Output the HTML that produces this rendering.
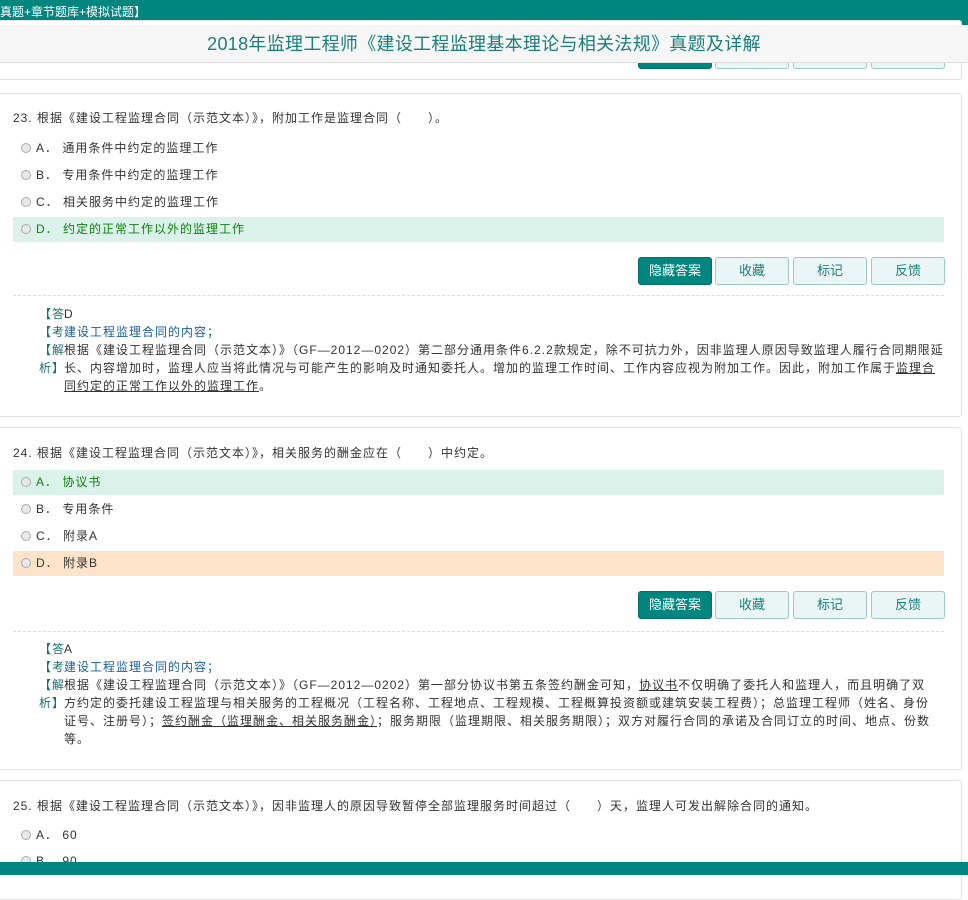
<!DOCTYPE html>
<html><head><meta charset="utf-8"><style>
*{margin:0;padding:0;box-sizing:border-box}
body{width:968px;height:875px;overflow:hidden;background:#fff;font-family:"Liberation Sans","Noto Sans CJK SC",sans-serif;font-size:12px;color:#333;position:relative;letter-spacing:1px}
.top{position:absolute;left:0;top:0;width:968px;height:25px;background:#00867f;color:#fff;font-size:12px;line-height:25px;padding-left:0;letter-spacing:0}
.hd{position:absolute;left:0;top:25px;width:968px;height:38px;background:#f6f6f6;border-bottom:1px solid #ddd;text-align:center;color:#1a7f7a;font-size:18px;line-height:38px;z-index:2;letter-spacing:0.3px}
.card{position:absolute;left:-6px;width:968px;border:1px solid #e3e3e3;border-radius:3px;background:#fff}
.q{position:absolute;left:18px;font-size:12px;white-space:nowrap}
.opt{position:absolute;left:18px;width:931px;height:25px;line-height:25px;padding-left:8px}
.opt i{display:inline-block;width:10px;height:10px;border:1px solid #aaa;border-radius:50%;background:#e8e8e8;vertical-align:-1px;margin-right:5px}
.g{background:#daf2ea;color:#118011}
.o{background:#fde3c9}
.btn{position:absolute;width:74px;height:28px;border:1px solid #9bc9c5;border-radius:3px;background:#eaf6f5;color:#1a7f7a;text-align:center;line-height:26px;font-size:13px;letter-spacing:0}
.btn.p{background:#00867f;color:#fff;border-color:#00706a}
.dash{position:absolute;left:18px;width:931px;border-top:1px dashed #ddd}
.ans{position:absolute;left:44px;width:905px;line-height:18px;font-size:12px}
.ans div{position:relative;padding-left:25px}
.ans b{position:absolute;left:0;font-weight:normal;color:#1a6f6a}
.bl{color:#1a5fa0}
u{text-decoration:underline}
.bot{position:absolute;left:0;top:862px;width:968px;height:13px;background:#00867f}
</style></head><body>
<div class="top">真题+章节题库+模拟试题】</div>
<div class="hd">2018年监理工程师《建设工程监理基本理论与相关法规》真题及详解</div>
<div class="card" style="top:20px;height:60px">
<div class="btn p" style="left:643px;top:20px"></div><div class="btn" style="left:720px;top:20px"></div><div class="btn" style="left:798px;top:20px"></div><div class="btn" style="left:876px;top:20px"></div>
</div>

<div class="card" style="top:93px;height:324px">
<div class="q" style="top:15px">23. 根据《建设工程监理合同（示范文本）》，附加工作是监理合同（　　）。</div>
<div class="opt" style="top:42px"><i></i>A．  通用条件中约定的监理工作</div>
<div class="opt" style="top:69px"><i></i>B．  专用条件中约定的监理工作</div>
<div class="opt" style="top:96px"><i></i>C．  相关服务中约定的监理工作</div>
<div class="opt g" style="top:123px"><i></i>D．  约定的正常工作以外的监理工作</div>
<div class="btn p" style="left:643px;top:163px">隐藏答案</div><div class="btn" style="left:720px;top:163px">收藏</div><div class="btn" style="left:798px;top:163px">标记</div><div class="btn" style="left:876px;top:163px">反馈</div>
<div class="dash" style="top:201px"></div>
<div class="ans" style="top:211px">
<div><b>【答</b>D</div>
<div class="bl"><b>【考</b>建设工程监理合同的内容；</div>
<div><b>【解<br>析】</b>根据《建设工程监理合同（示范文本）》（GF—2012—0202）第二部分通用条件6.2.2款规定，除不可抗力外，因非监理人原因导致监理人履行合同期限延长、内容增加时，监理人应当将此情况与可能产生的影响及时通知委托人。增加的监理工作时间、工作内容应视为附加工作。因此，附加工作属于<u>监理合同约定的正常工作以外的监理工作</u>。</div>
</div>
</div>

<div class="card" style="top:427px;height:343px">
<div class="q" style="top:16px">24. 根据《建设工程监理合同（示范文本）》，相关服务的酬金应在（　　）中约定。</div>
<div class="opt g" style="top:42px"><i></i>A．  协议书</div>
<div class="opt" style="top:69px"><i></i>B．  专用条件</div>
<div class="opt" style="top:96px"><i></i>C．  附录A</div>
<div class="opt o" style="top:123px"><i></i>D．  附录B</div>
<div class="btn p" style="left:643px;top:163px">隐藏答案</div><div class="btn" style="left:720px;top:163px">收藏</div><div class="btn" style="left:798px;top:163px">标记</div><div class="btn" style="left:876px;top:163px">反馈</div>
<div class="dash" style="top:203px"></div>
<div class="ans" style="top:212px;width:898px">
<div><b>【答</b>A</div>
<div class="bl"><b>【考</b>建设工程监理合同的内容；</div>
<div><b>【解<br>析】</b>根据《建设工程监理合同（示范文本）》（GF—2012—0202）第一部分协议书第五条签约酬金可知，<u>协议书</u>不仅明确了委托人和监理人，而且明确了双方约定的委托建设工程监理与相关服务的工程概况（工程名称、工程地点、工程规模、工程概算投资额或建筑安装工程费）；总监理工程师（姓名、身份证号、注册号）；<u>签约酬金（监理酬金、相关服务酬金）</u>；服务期限（监理期限、相关服务期限）；双方对履行合同的承诺及合同订立的时间、地点、份数等。</div>
</div>
</div>

<div class="card" style="top:780px;height:120px">
<div class="q" style="top:16px">25. 根据《建设工程监理合同（示范文本）》，因非监理人的原因导致暂停全部监理服务时间超过（　　）天，监理人可发出解除合同的通知。</div>
<div class="opt" style="top:42px"><i></i>A．  60</div>
<div class="opt" style="top:68px"><i></i>B．  90</div>
</div>
<div class="bot"></div>
</body></html>
